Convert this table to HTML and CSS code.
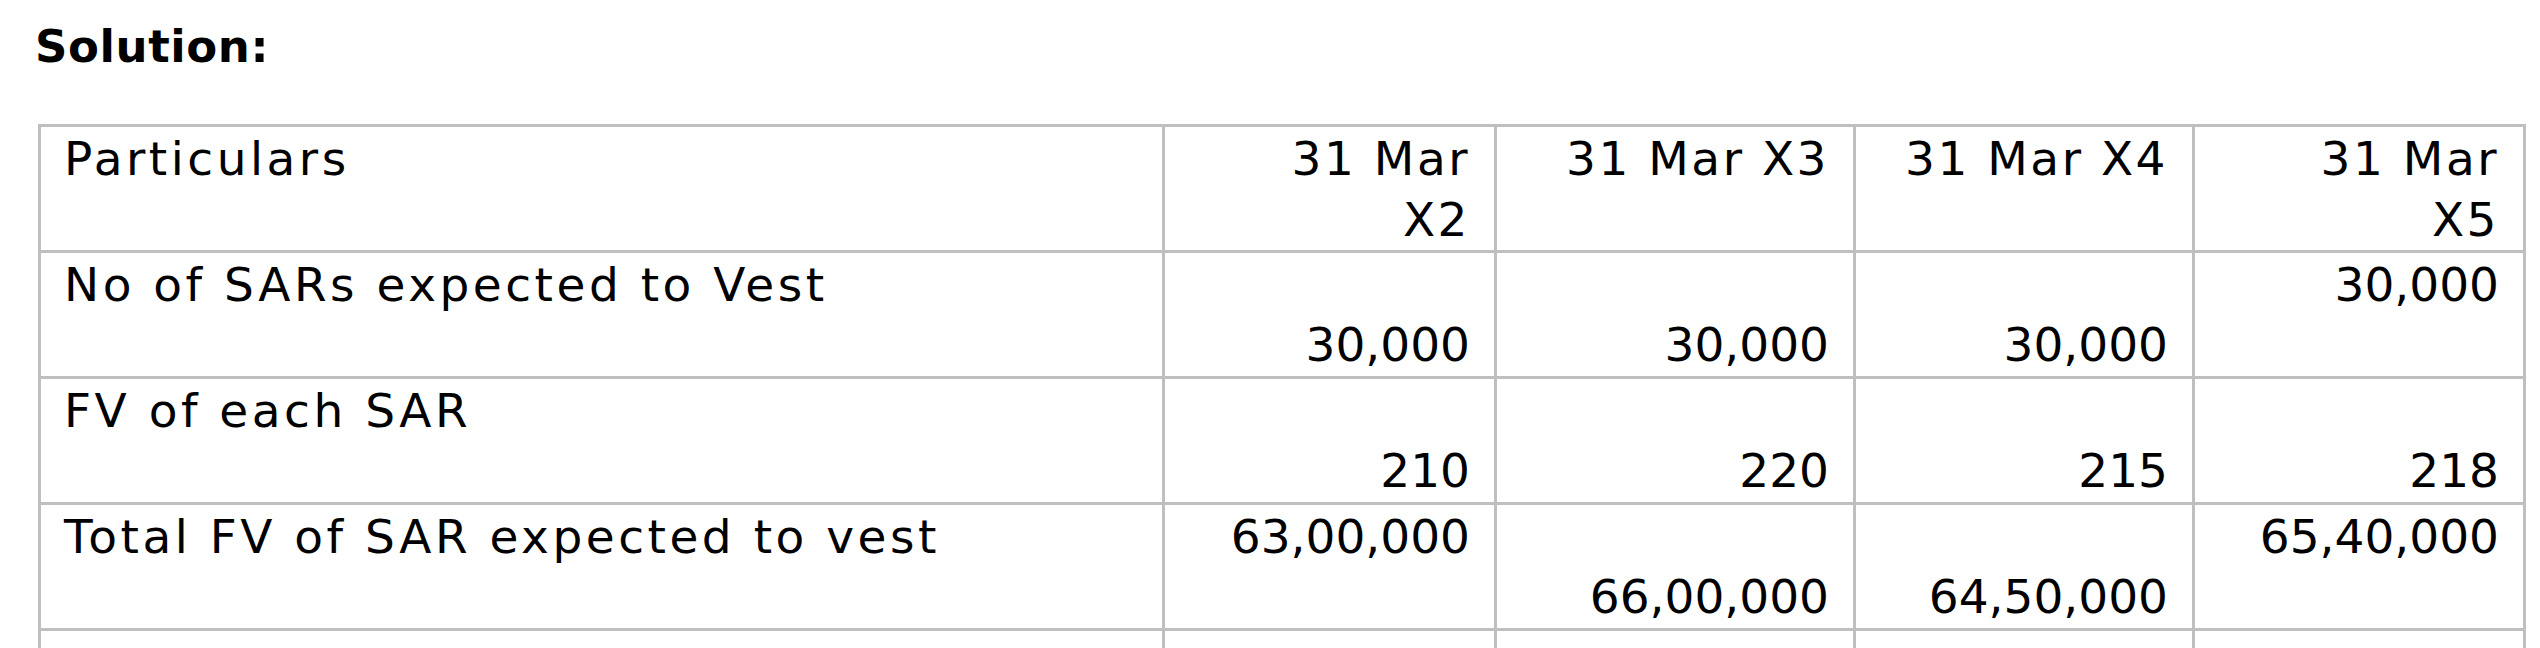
FILE: index.html
```html
<!DOCTYPE html>
<html lang="en">
<head>
<meta charset="utf-8">
<title>Solution</title>
<link rel="stylesheet" href="styles.css">
</head>
<body>
<main class="doc">
  <h1 class="title">Solution:</h1>
  <table class="sheet">
    <colgroup>
      <col class="c-label">
      <col class="c-x2">
      <col class="c-x3">
      <col class="c-x4">
      <col class="c-x5">
    </colgroup>
    <tbody>
      <tr>
        <td class="label">Particulars</td>
        <td class="num head">31 Mar<br>X2</td>
        <td class="num head">31 Mar X3</td>
        <td class="num head">31 Mar X4</td>
        <td class="num head">31 Mar<br>X5</td>
      </tr>
      <tr>
        <td class="label">No of SARs expected to Vest</td>
        <td class="num low">30,000</td>
        <td class="num low">30,000</td>
        <td class="num low">30,000</td>
        <td class="num">30,000</td>
      </tr>
      <tr>
        <td class="label">FV of each SAR</td>
        <td class="num low">210</td>
        <td class="num low">220</td>
        <td class="num low">215</td>
        <td class="num low">218</td>
      </tr>
      <tr>
        <td class="label">Total FV of SAR expected to vest</td>
        <td class="num">63,00,000</td>
        <td class="num low">66,00,000</td>
        <td class="num low">64,50,000</td>
        <td class="num">65,40,000</td>
      </tr>
      <tr>
        <td class="label"></td>
        <td class="num"></td>
        <td class="num"></td>
        <td class="num"></td>
        <td class="num"></td>
      </tr>
    </tbody>
  </table>
</main>
</body>
</html>
```
FILE: styles.css
```css
html, body {
  margin: 0;
  padding: 0;
  background: #ffffff;
  color: #000000;
}

.doc {
  padding: 21px 0 0 38px;
  font-family: "DejaVu Sans", "Liberation Sans", sans-serif;
}

.title {
  margin: 0 0 0 -3px;
  font-family: "DejaVu Sans", sans-serif;
  font-weight: bold;
  font-size: 45px;
  line-height: 52px;
  letter-spacing: 0.6px;
}

.sheet {
  margin-top: 51px;
  table-layout: fixed;
  width: 2488px;
  border-collapse: separate;
  border-spacing: 0;
  border-top: 3px solid #bfbfbf;
  border-left: 3px solid #bfbfbf;
  font-size: 47px;
  line-height: 60.5px;
}

.c-label { width: 1124px; }
.c-x2 { width: 332px; }
.c-x3 { width: 359px; }
.c-x4 { width: 339px; }
.c-x5 { width: 331px; }

.sheet td {
  box-sizing: border-box;
  height: 126px;
  padding: 2px 24px 0 23px;
  border-right: 3px solid #bfbfbf;
  border-bottom: 3px solid #bfbfbf;
  vertical-align: top;
  white-space: nowrap;
  overflow: hidden;
}

.label {
  text-align: left;
  letter-spacing: 3.5px;
}

.num {
  text-align: right;
}

.head {
  letter-spacing: 2.5px;
}

.sheet td.low {
  vertical-align: bottom;
  padding-bottom: 1px;
}
```
